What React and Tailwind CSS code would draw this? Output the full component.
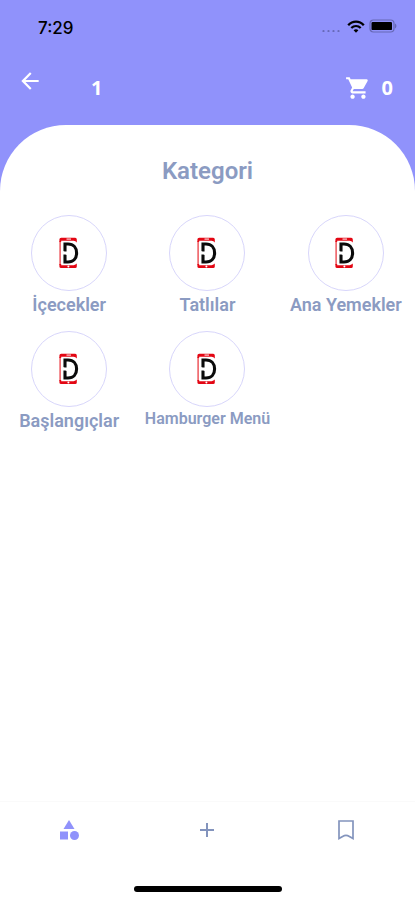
import { MdAdd, MdArrowBack, MdCategory, MdShoppingCart } from 'react-icons/md';

function BookmarkIcon({ className }) {
  return (
    <svg viewBox="0 0 24 24" className={className} fill="none" stroke="currentColor" strokeWidth="1.7" aria-hidden="true">
      <path d="M5 3H19V20.6L15.4 18.4Q12 16.4 8.6 18.4L5 20.6Z" />
    </svg>
  );
}

const categories = [
  { name: 'İçecekler' },
  { name: 'Tatlılar' },
  { name: 'Ana Yemekler' },
  { name: 'Başlangıçlar' },
  { name: 'Hamburger Menü', small: true },
];

const tabs = [
  { label: 'Kategoriler', icon: MdCategory, active: true },
  { label: 'Ekle', icon: MdAdd },
  { label: 'Kaydedilenler', icon: BookmarkIcon },
];

function StatusBar() {
  return (
    <div className="flex h-14 items-center justify-between pl-[38px] pr-[18px] text-black">
      <span className="font-['Inter'] text-[17px] leading-6 font-medium">7:29</span>
      <div className="flex items-center gap-1 pb-1">
        <svg viewBox="0 0 20 12" className="h-3 w-5" aria-hidden="true">
          <g fill="#6769b8">
            <circle cx="3.5" cy="11" r="1.1" />
            <circle cx="8.5" cy="11" r="1.1" />
            <circle cx="13.5" cy="11" r="1.1" />
            <circle cx="18.5" cy="11" r="1.1" />
          </g>
        </svg>
        <svg viewBox="0 0 18 13" className="ml-[3px] h-[13px] w-[18px]" fill="none" stroke="currentColor" aria-hidden="true">
          <path d="M1.2 5.2C5.6 0.4 12.4 0.4 16.8 5.2" strokeWidth="2.3" />
          <path d="M4.3 8.1C7 5.3 11 5.3 13.7 8.1" strokeWidth="2.2" />
          <path d="M9 12.8 6.6 10.3C8 8.9 10 8.9 11.4 10.3Z" fill="currentColor" stroke="none" />
        </svg>
        <svg viewBox="0 0 28 14" className="h-[14px] w-7" aria-hidden="true">
          <rect x="1" y="1" width="24" height="12" rx="3.5" fill="none" stroke="#6668b5" strokeWidth="1.2" />
          <rect x="2.5" y="2.9" width="20.5" height="8.2" rx="1.2" fill="#000" />
          <path d="M26 4.6C27.9 5.3 27.9 8.7 26 9.4Z" fill="#6668b5" />
        </svg>
      </div>
    </div>
  );
}

/* Red phone outline with a black "D" mark over its right edge */
function Logo() {
  return (
    <svg viewBox="0 0 20 32" className="h-8 w-5" fill="none" aria-hidden="true">
      <path d="M1.1 4V28" stroke="#ec4a50" strokeWidth="1.4" />
      <path d="M0.4 5V2.4Q0.4 0.8 2.2 0.8H16.2Q17.8 0.8 17.8 2.4V5.6Q16.6 4 14.6 3.8H2.2V5Z" fill="#e30613" />
      <path d="M0.4 27V29.4Q0.4 31 2.2 31H16.2Q17.8 31 17.8 29.4V26.6Q16.6 28 14.6 28.2H2.2V27Z" fill="#e30613" />
      <path d="M7.5 2.1H12" stroke="#fbd5d6" strokeWidth="1.2" />
      <circle cx="9.4" cy="29.5" r="1" fill="#fff" />
      <path d="M6 14.5V7H9C14.5 7 17.6 10.6 17.6 16C17.6 21.4 14.5 25 9 25H6V17.5" stroke="#0b0b0b" strokeWidth="3.1" />
      <path d="M3.5 14.6 8.4 17.2" stroke="#fff" strokeWidth="1.6" />
    </svg>
  );
}

function CategoryCard({ name, small }) {
  return (
    <a href="#" className="flex h-29 flex-col items-center">
      <span className="flex size-[76px] items-center justify-center rounded-full border border-[#d8d6fb] pr-px">
        <Logo />
      </span>
      <span className={`whitespace-nowrap font-semibold ${small ? 'text-base leading-6' : 'text-lg leading-7'}`}>
        {name}
      </span>
    </a>
  );
}

export default function App() {
  return (
    <div className="flex min-h-screen flex-col bg-[#9092fb] font-['Roboto',sans-serif] text-[#8b9bc2]">
      <header className="text-white">
        <StatusBar />
        <div className="flex h-[69px] items-start justify-between pl-[17px] pr-[22px]">
          <div className="flex items-start">
            <button type="button" aria-label="Geri" className="pt-3">
              <MdArrowBack className="size-[26px]" />
            </button>
            <h1 className="ml-12 pt-4 font-['Noto_Sans',sans-serif] text-xl leading-8 font-bold">1</h1>
          </div>
          <button
            type="button"
            aria-label="Sepet"
            className="flex items-center gap-[11px] pt-4 font-['Noto_Sans',sans-serif] text-xl leading-8 font-bold"
          >
            <MdShoppingCart className="size-[26px]" />
            0
          </button>
        </div>
      </header>

      <main className="flex-1 rounded-t-[66px] bg-white pt-7">
        <h2 className="text-center text-2xl leading-9 font-semibold">Kategori</h2>
        <div className="mt-[26px] grid grid-cols-3">
          {categories.map((category) => (
            <CategoryCard key={category.name} name={category.name} small={category.small} />
          ))}
        </div>
      </main>

      <footer className="border-t border-[#fafafa] bg-white">
        <nav className="grid h-14 grid-cols-3">
          {tabs.map((tab) => {
            const Icon = tab.icon;
            return (
              <button
                key={tab.label}
                type="button"
                aria-label={tab.label}
                className={`flex items-center justify-center ${tab.active ? 'text-[#9092fb]' : 'text-[#8394bd]'}`}
              >
                <Icon className="size-6" />
              </button>
            );
          })}
        </nav>
        <div className="flex h-[42px] justify-center pt-7">
          <div className="h-[6px] w-37 rounded-full bg-black" />
        </div>
      </footer>
    </div>
  );
}
